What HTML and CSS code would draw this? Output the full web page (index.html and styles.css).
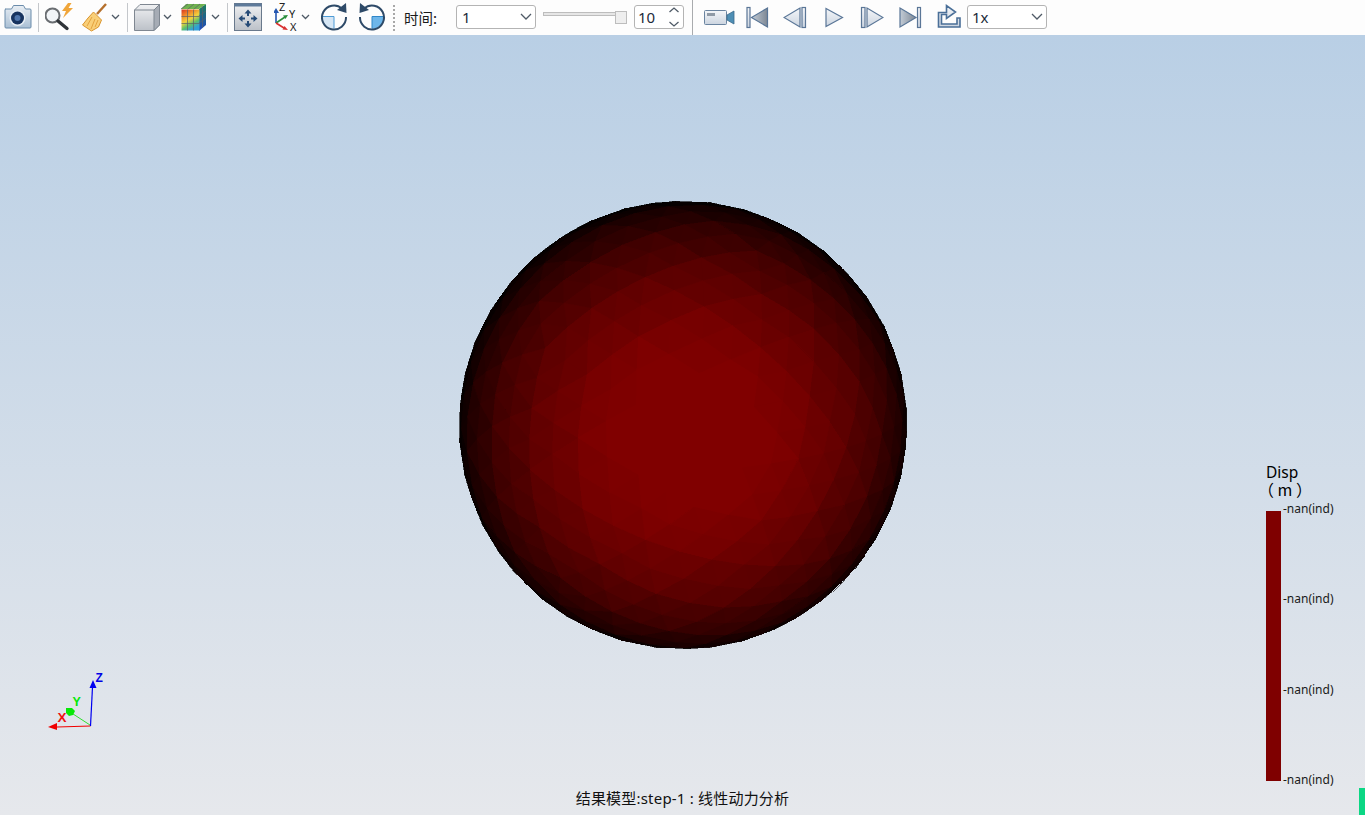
FILE: index.html
```html
<!DOCTYPE html>
<html lang="zh">
<head>
<meta charset="utf-8">
<title>结果模型</title>
<link rel="stylesheet" href="styles.css">
</head>
<body>
<div class="app">
  <header class="toolbar">
    <svg class="ic ml4" width="28" height="35" viewBox="4 0 28 35">
      <defs>
        <linearGradient id="gBody" x1="0" y1="0" x2="0" y2="1"><stop offset="0" stop-color="#e8eef4"/><stop offset="1" stop-color="#a9bfd4"/></linearGradient>
        <linearGradient id="gCube" x1="0" y1="0" x2="0" y2="1"><stop offset="0" stop-color="#f0f1f3"/><stop offset="1" stop-color="#bcc1c8"/></linearGradient>
        <linearGradient id="gMedia" x1="0" y1="0" x2="0" y2="1"><stop offset="0" stop-color="#f4f6f9"/><stop offset="1" stop-color="#ccd5e0"/></linearGradient>
        <linearGradient id="gDark" x1="0" y1="0" x2="1" y2="0"><stop offset="0" stop-color="#c3ccd6"/><stop offset="1" stop-color="#7d8794"/></linearGradient>
        <linearGradient id="gRub" x1="0" y1="0" x2=".5" y2="1"><stop offset="0" stop-color="#d8321f"/><stop offset=".3" stop-color="#f08a2a"/><stop offset=".55" stop-color="#f2d23e"/><stop offset=".78" stop-color="#5fc06a"/><stop offset="1" stop-color="#2f9fd8"/></linearGradient>
        <linearGradient id="gRubSide" x1="0" y1="0" x2="0" y2="1"><stop offset="0" stop-color="#1d7f5c"/><stop offset="1" stop-color="#2048c0"/></linearGradient>
      </defs>
      <path d="M5.500 9h6l2-3.500h10l2 3.500h4.500q1 0 1 1v17q0 1-1 1h-24q-1 0-1-1v-17q0-1 1-1z" fill="url(#gBody)" stroke="#6b8cab"/>
      <circle cx="17.500" cy="18" r="8" fill="#e6edf4"/>
      <circle cx="17.500" cy="18" r="6.500" fill="#17335f"/>
      <circle cx="17.500" cy="18" r="3" fill="#4f75ab"/>
    </svg>
    <span class="sep"></span>
    <svg class="ic" width="28" height="35" viewBox="45 0 28 35">
      <path d="M68 3l-6 8h4l-3 7 10-10h-4.500l3-5z" fill="#f0a63a"/>
      <circle cx="52.500" cy="15.500" r="7" fill="#f2f5f8" stroke="#6a6e72" stroke-width="2"/>
      <path d="M58 21l9 7.500" stroke="#2f3338" stroke-width="3.400" stroke-linecap="round"/>
    </svg>
    <svg class="ic ml9" width="25" height="35" viewBox="82 0 25 35">
      <path d="M106 4L97 14" stroke="#b5702c" stroke-width="2.400"/>
      <path d="M93.500 12l8 8-3 7-7 4-9-6 5.500-7z" fill="#f9cf78" stroke="#d9952f"/>
      <path d="M92 17l-5 9M95 19l-4 10M98 20l-3 7" stroke="#e5a23e" fill="none"/>
    </svg>
    <svg class="chev ml4" width="9" height="35" viewBox="0 0 9 35"><path d="M1 15l3.500 3.500L8 15"/></svg>
    <span class="sep sep7"></span>
    <svg class="ic" width="26" height="35" viewBox="133 0 26 35">
      <path d="M133.500 10L139 4.500h19.500V25L153 30.500h-19.500z" fill="url(#gCube)" stroke="#7f8791"/>
      <path d="M133.500 10H153L158.500 4.500" fill="none" stroke="#7f8791"/>
      <path d="M153 10l5.500-5.500V25L153 30.500z" fill="#a6acb5" stroke="#7f8791"/>
    </svg>
    <svg class="chev ml3" width="9" height="35" viewBox="0 0 9 35"><path d="M1 15l3.500 3.500L8 15"/></svg>
    <svg class="ic ml9" width="26" height="35" viewBox="180 0 26 35">
      <path d="M198 9l7-5v21l-7 6z" fill="url(#gRubSide)"/>
      <path d="M185 4h20l-7 5h-18z" fill="#6fb24f"/>
      <rect x="180.500" y="9.500" width="18" height="21" fill="url(#gRub)"/>
      <path d="M186.500 9.500v21M192.500 9.500v21M180.500 16.500h18M180.500 23.500h18M201.500 6.500v21M198 16l7-5M198 23l7-5M187 4l-7 5M193 4l-6 5M199 4l-6 5" stroke="#5a6068" stroke-width=".7" fill="none"/>
    </svg>
    <svg class="chev ml4" width="9" height="35" viewBox="0 0 9 35"><path d="M1 15l3.500 3.500L8 15"/></svg>
    <span class="sep sep7"></span>
    <svg class="ic" width="28" height="35" viewBox="233 0 28 35">
      <rect x="233.500" y="3.500" width="27" height="27" fill="url(#gCube)" stroke="#69798c"/>
      <rect x="233.500" y="3.500" width="27" height="3" fill="#5e7a9a"/>
      <path d="M247 9.500l-3.500 4h2.500v2.500h2v-2.500h2.500zM247 27.500l-3.500-4h2.500V21h2v2.500h2.500zM237.500 18.500l4-3.500v2.500h2.500v2h-2.500V22zM256.500 18.500l-4-3.500v2.500H250v2h2.500V22z" fill="#254a76"/>
    </svg>
    <svg class="ic ml12" width="24" height="35" viewBox="273 0 24 35">
      <path d="M275 23V10" stroke="#2456b0" stroke-width="1.600"/><path d="M275 8l-3 5h6z" fill="#2456b0"/>
      <path d="M275 23l9-6" stroke="#2a8f3d" stroke-width="1.600"/><path d="M287 15l-5 .5 2.500 3.500z" fill="#2a8f3d"/>
      <path d="M275 23l8 5" stroke="#d83030" stroke-width="1.600"/><path d="M287 30l-5.500-.5 2-3.500z" fill="#d83030"/>
      <text class="axis-t" x="278" y="11">Z</text><text class="axis-t" x="288" y="18">Y</text><text class="axis-t" x="289" y="31">X</text>
    </svg>
    <svg class="chev ml3" width="9" height="35" viewBox="0 0 9 35"><path d="M1 15l3.500 3.500L8 15"/></svg>
    <svg class="ic ml11" width="27" height="35" viewBox="320 0 27 35">
      <path d="M333 16.500V29a12 12 0 0 1-12-12.500z" fill="#d5e6f5"/>
      <path d="M333 16.500h-12M333 16.500v12" stroke="#4d9bd6" fill="none"/>
      <path d="M341 8.500a12 12 0 1 0 4 8.500" fill="none" stroke="#2e4a68" stroke-width="2"/>
      <path d="M345 3l.5 10-9.500-3z" fill="#2e4a68"/>
    </svg>
    <svg class="ic ml11" width="27" height="35" viewBox="358 0 27 35">
      <path d="M371 16.500V29a12 12 0 0 0 12-12.500z" fill="#6db6ea"/>
      <path d="M371 16.500h12M371 16.500v12" stroke="#2f86c8" fill="none"/>
      <path d="M363 8.500a12 12 0 1 1-4 8.500" fill="none" stroke="#2e4a68" stroke-width="2"/>
      <path d="M359 3l-.5 10 9.500-3z" fill="#2e4a68"/>
    </svg>
    <span class="grip"></span>
    <label class="time-label">时间:</label>
    <div class="combo combo-time"><span>1</span><svg class="chev" width="12" height="22" viewBox="0 0 12 22"><path d="M1 8l5 5 5-5"/></svg></div>
    <div class="slider"><span class="slider-groove"></span><span class="slider-thumb"></span></div>
    <div class="combo spin"><span>10</span><svg class="chev" width="12" height="22" viewBox="0 0 12 22"><path d="M1.500 6l4.500-4 4.500 4M1.500 16l4.500 4 4.500-4"/></svg></div>
    <span class="sep sep8"></span>
    <svg class="ic ml3" width="31" height="35" viewBox="704 0 31 35">
      <rect x="704.500" y="10.500" width="22" height="14" rx="1" fill="url(#gMedia)" stroke="#6a84a0"/>
      <rect x="707" y="13" width="8" height="3" fill="#8f9aa6"/>
      <path d="M727 15l7-4v13l-7-4z" fill="#4e8fb5" stroke="#3a6a8c" stroke-width=".8"/>
    </svg>
    <svg class="ic media ml11" width="23" height="35" viewBox="746 0 23 35">
      <rect x="747" y="7.500" width="3" height="20" fill="url(#gMedia)"/>
      <path d="M767.500 8v19L751.500 17.500z" fill="url(#gDark)"/>
    </svg>
    <svg class="ic media ml14" width="24" height="35" viewBox="783 0 24 35">
      <path d="M800 8v19l-16-9.500z" fill="url(#gMedia)"/>
      <rect x="802" y="7.500" width="3.500" height="20" fill="url(#gMedia)"/>
    </svg>
    <svg class="ic media ml18" width="19" height="35" viewBox="825 0 19 35">
      <path d="M826 8.500v18L842.500 17.500z" fill="url(#gMedia)"/>
    </svg>
    <svg class="ic media ml16" width="24" height="35" viewBox="859 0 24 35">
      <rect x="860.500" y="7.500" width="3.500" height="20" fill="url(#gMedia)"/>
      <path d="M866 8v19l16-9.500z" fill="url(#gMedia)"/>
    </svg>
    <svg class="ic media ml15" width="24" height="35" viewBox="898 0 24 35">
      <path d="M899 8v19l16-9.500z" fill="url(#gDark)"/>
      <rect x="916.500" y="7.500" width="3" height="20" fill="url(#gMedia)"/>
    </svg>
    <svg class="ic media media-bold ml14" width="25" height="35" viewBox="936 0 25 35">
      <path d="M937.500 12.500h8V5.500l9 6.500-9 6.500v-4h-5v9.500h15.500v-6h3v9h-21.500z" fill="url(#gMedia)"/>
    </svg>
    <div class="combo combo-speed ml5"><span>1x</span><svg class="chev" width="12" height="22" viewBox="0 0 12 22"><path d="M1 8l5 5 5-5"/></svg></div>
  </header>
  <main class="viewport">
    <svg id="sphere" class="sphere" width="460" height="460" viewBox="-230 -230 460 460"><circle class="sphere-base" r="223.500"/></svg>
    <svg class="triad" width="70" height="72" viewBox="40 670 70 72">
      <path d="M90 725l-20-13" stroke="#30e030" fill="none"/>
      <path d="M66 708h6l3 3-2 4-4 1-3-3z" fill="#06e806"/>
      <path d="M90.500 726L57 727" stroke="#f00000" stroke-width="1.200"/>
      <path d="M48 727l9-4v7z" fill="#f00000"/>
      <path d="M90.500 726L92.500 687" stroke="#0000f0" stroke-width="1.200"/>
      <path d="M93 680l-3.500 8h7z" fill="#0000f0"/>
      <text class="t-z" x="95.500" y="682">Z</text>
      <text class="t-y" x="72.500" y="706">Y</text>
      <text class="t-x" x="57.500" y="722">X</text>
    </svg>
    <aside class="legend">
      <div class="legend-title">Disp</div>
      <div class="legend-unit">（ m ）</div>
      <div class="legend-scale">
        <span class="legend-bar"></span>
        <div class="legend-labels"><span>-nan(ind)</span><span>-nan(ind)</span><span>-nan(ind)</span><span>-nan(ind)</span></div>
      </div>
    </aside>
    <div class="caption">结果模型:step-1 : 线性动力分析</div>
    <span class="corner"></span>
  </main>
</div>
<script src="sphere.js"></script>
</body>
</html>
```

FILE: styles.css
```css
* { box-sizing: border-box; }
html, body { margin: 0; height: 100%; overflow: hidden; }
body { font-family: "Noto Sans", "Noto Sans CJK SC", sans-serif; color: #111; }
.app { display: flex; flex-direction: column; width: 1365px; height: 815px; }

.toolbar { flex: 0 0 35px; display: flex; align-items: center; background: #fdfdfd; }
.ic { display: block; flex: none; }
.chev { display: block; flex: none; fill: none; stroke: #4f5a66; stroke-width: 1.300; }
.sep { flex: none; width: 1px; height: 29px; margin: 0 6px; background: #c4c7cb; }
.sep7 { margin: 0 6px 0 7px; }
.sep8 { height: 35px; margin: 0 8px; background: #a9abae; }
.ml3 { margin-left: 3px; } .ml4 { margin-left: 4px; } .ml5 { margin-left: 5px; }
.ml9 { margin-left: 9px; } .ml11 { margin-left: 11px; } .ml12 { margin-left: 12px; }
.ml14 { margin-left: 14px; } .ml15 { margin-left: 15px; } .ml16 { margin-left: 16px; }
.ml18 { margin-left: 18px; }
.axis-t { font: 11px "Noto Sans", sans-serif; fill: #222; }
.media path, .media rect { stroke: #5a7697; stroke-width: 1.200; }
.media-bold path { stroke: #4a6f98; stroke-width: 1.600; }
.grip { flex: none; width: 2px; height: 26px; margin: 0 9px 0 7px; background: repeating-linear-gradient(#a8a8a8 0 2px, transparent 2px 4px); }
.time-label { flex: none; width: 52px; font: 14.500px "Noto Sans CJK SC", sans-serif; color: #1a1a1a; }

.combo { flex: none; align-self: flex-start; margin-top: 5px; display: flex; align-items: center; justify-content: space-between; height: 24px; padding: 0 3px 0 5px; border: 1px solid #b4b4b4; border-radius: 3px; background: #fff; font: 15px "Noto Sans", sans-serif; color: #1b2a3a; }
.combo-time { width: 80px; }
.combo-speed { width: 80px; padding-left: 4px; }
.spin { width: 50px; padding-left: 3px; }

.slider { flex: none; position: relative; width: 84px; height: 24px; margin: 0 7px; }
.slider-groove { position: absolute; left: 0; right: 6px; top: 6px; height: 4px; background: #e6e6e6; border: 1px solid #bdbdbd; }
.slider-thumb { position: absolute; right: 0; top: 5px; width: 12px; height: 13px; background: #eeeeee; border: 1px solid #bdbdbd; }

.viewport { position: relative; flex: 1; background: linear-gradient(#b9cfe5, #e6e8ec); overflow: hidden; }
.sphere { position: absolute; left: 453px; top: 159.500px; shape-rendering: crispEdges; }
.sphere polygon { stroke-width: .6; }
.sphere-base { fill: #0a0000; }
.triad { position: absolute; left: 40px; top: 635px; }
.t-z { font: bold 12px "Liberation Sans", sans-serif; fill: #0000e6; }
.t-y { font: bold 12.500px "Liberation Sans", sans-serif; fill: #06e806; }
.t-x { font: bold 13.500px "Liberation Sans", sans-serif; fill: #f01010; }

.legend { position: absolute; left: 1266px; top: 429px; width: 99px; }
.legend-title { font: 15.500px/17px "Noto Sans", sans-serif; color: #000; }
.legend-unit { font: 16px/17px "Noto Sans CJK SC", sans-serif; color: #000; margin-left: -8px; }
.legend-scale { display: flex; margin-top: 13px; }
.legend-bar { flex: none; width: 15px; height: 270px; background: #7f0000; }
.legend-labels { display: flex; flex-direction: column; justify-content: space-between; height: 287px; margin: -10px 0 0 2px; font: 12px/16px "Noto Sans", sans-serif; color: #1a1a1a; }

.caption { position: absolute; left: 0; right: 0; bottom: 8px; text-align: center; font: 15px/18px "Noto Sans", "Noto Sans CJK SC", sans-serif; letter-spacing: .2px; color: #111; }
.corner { position: absolute; right: 0; bottom: 0; width: 6px; height: 27px; background: #0bd784; }
```

FILE: sphere.js
```js
(function () {
  var NS = "http://www.w3.org/2000/svg";
  var svg = document.getElementById("sphere");
  var R = 224;
  var t = (1 + Math.sqrt(5)) / 2;
  var verts = [[-1,t,0],[1,t,0],[-1,-t,0],[1,-t,0],[0,-1,t],[0,1,t],[0,-1,-t],[0,1,-t],[t,0,-1],[t,0,1],[-t,0,-1],[-t,0,1]];
  var faces = [[0,11,5],[0,5,1],[0,1,7],[0,7,10],[0,10,11],[1,5,9],[5,11,4],[11,10,2],[10,7,6],[7,1,8],[3,9,4],[3,4,2],[3,2,6],[3,6,8],[3,8,9],[4,9,5],[2,4,11],[6,2,10],[8,6,7],[9,8,1]];
  function norm(v) { var l = Math.hypot(v[0], v[1], v[2]); return [v[0]/l, v[1]/l, v[2]/l]; }
  function mid(a, b) { return norm([a[0]+b[0], a[1]+b[1], a[2]+b[2]]); }
  function center(a, b, c) { return norm([a[0]+b[0]+c[0], a[1]+b[1]+c[1], a[2]+b[2]+c[2]]); }
  var tris = faces.map(function (f) { return { v: [norm(verts[f[0]]), norm(verts[f[1]]), norm(verts[f[2]])] }; });
  for (var level = 0; level < 3; level++) {
    var next = [];
    tris.forEach(function (tr) {
      var v = tr.v;
      var ab = mid(v[0], v[1]), bc = mid(v[1], v[2]), ca = mid(v[2], v[0]);
      // the facet that a triangle was cut from gives the coarse, diamond-like shading
      var coarse = level === 2 ? center(v[0], v[1], v[2]) : null;
      [[v[0], ab, ca], [v[1], bc, ab], [v[2], ca, bc], [ab, bc, ca]].forEach(function (n) {
        next.push({ v: n, coarse: coarse });
      });
    });
    tris = next;
  }
  var ax = 0.42, ay = 0.3, az = 0.2;
  function rot(p) {
    var x = p[0], y = p[1], z = p[2], c, s, n;
    c = Math.cos(ax); s = Math.sin(ax); n = y*c - z*s; z = y*s + z*c; y = n;
    c = Math.cos(ay); s = Math.sin(ay); n = x*c + z*s; z = -x*s + z*c; x = n;
    c = Math.cos(az); s = Math.sin(az); n = x*c - y*s; y = x*s + y*c; x = n;
    return [x, y, z];
  }
  var light = norm([0.03, 0.05, 1]);
  function dot(n) { return Math.max(0, n[0]*light[0] + n[1]*light[1] + n[2]*light[2]); }
  tris.map(function (tr) {
    var a = rot(tr.v[0]), b = rot(tr.v[1]), c = rot(tr.v[2]);
    return { a: a, b: b, c: c, n: center(a, b, c), m: rot(tr.coarse) };
  }).filter(function (f) { return f.n[2] > 0; })
    .sort(function (p, q) { return p.n[2] - q.n[2]; })
    .forEach(function (f) {
      var d = 0.65 * dot(f.n) + 0.35 * dot(f.m);
      if (f.n[2] < 0.12) { d = Math.min(d, dot(f.n)); }
      var r = Math.round(Math.min(128, 138 * Math.pow(d, 1.2)));
      var col = "rgb(" + r + ",0,0)";
      var el = document.createElementNS(NS, "polygon");
      el.setAttribute("points", [f.a, f.b, f.c].map(function (p) {
        return (p[0]*R).toFixed(1) + "," + (p[1]*R).toFixed(1);
      }).join(" "));
      el.setAttribute("fill", col);
      el.setAttribute("stroke", col);
      svg.appendChild(el);
    });
})();
```
